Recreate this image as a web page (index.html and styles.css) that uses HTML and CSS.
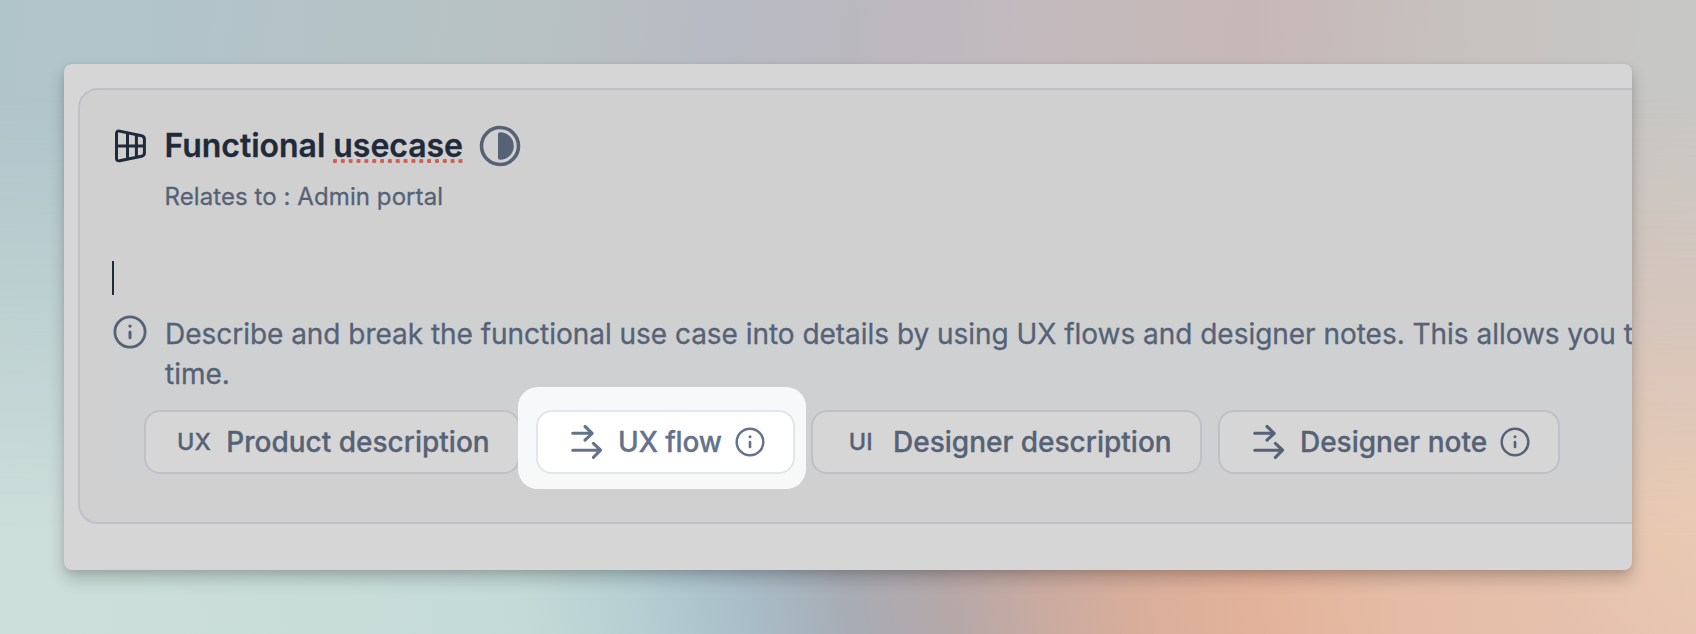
FILE: index.html
```
<!DOCTYPE html>
<html lang="en">
<head>
<meta charset="utf-8">
<title>Functional usecase</title>
<link rel="stylesheet" href="styles.css">
</head>
<body>
<svg class="defs" aria-hidden="true">
  <symbol id="info" viewBox="0 0 34 34">
    <circle cx="17" cy="17" r="15.1" fill="none" stroke="currentColor" stroke-width="2.8"/>
    <circle cx="17" cy="11.1" r="1.7" fill="currentColor"/>
    <path d="M17 17v5.7" fill="none" stroke="currentColor" stroke-width="3" stroke-linecap="round"/>
  </symbol>
  <symbol id="flow" viewBox="0 0 40 40">
    <path d="M6.8 11.3H26M19 4.5l7.2 6.8-7.2 6.8M6.8 28.2H34.4M27.4 21.4l7.2 6.8-7.2 7.2" fill="none" stroke="currentColor" stroke-width="3.1" stroke-linecap="round" stroke-linejoin="round"/>
  </symbol>
</svg>
<main class="window">
  <section class="panel">
    <header class="heading">
      <svg class="grid-icon" viewBox="0 0 36 36" fill="none" stroke="currentColor" stroke-width="3" stroke-linejoin="round">
        <path d="M7.6 3.1 29.6 7.7Q32.4 8.4 32.4 11V25Q32.4 27.6 29.6 28.2L7.6 32.8Q4.5 33.3 4.5 30.2V5.7Q4.5 2.5 7.6 3.1ZM4.5 18H32.4M15.5 4.9V31M24.4 6.7V29.2"/>
      </svg>
      <h1 class="title">Functional <span class="misspelled">usecase</span></h1>
      <svg class="status-icon" viewBox="0 0 42 42">
        <circle cx="21" cy="21" r="18.5" fill="none" stroke="currentColor" stroke-width="3.6"/>
        <path d="M21 7.2A13.8 13.8 0 0 1 21 34.8Q19 34.8 19 33V9Q19 7.2 21 7.2Z" fill="currentColor"/>
      </svg>
    </header>
    <p class="relates">Relates to : Admin portal</p>
    <div class="caret"></div>
    <div class="hint">
      <div class="hint-row">
        <svg class="hint-icon"><use href="#info"/></svg>
        <p class="hint-text">Describe and break the functional use case into details by using UX flows and designer notes. This allows you t<br>time.</p>
      </div>
      <div class="actions">
        <button class="action"><span class="slot">UX</span><span class="label">Product description</span></button>
        <button class="action highlighted"><svg class="slot"><use href="#flow"/></svg><span class="label">UX flow</span><svg class="info"><use href="#info"/></svg></button>
        <button class="action"><span class="slot">UI</span><span class="label">Designer description</span></button>
        <button class="action"><svg class="slot"><use href="#flow"/></svg><span class="label">Designer note</span><svg class="info"><use href="#info"/></svg></button>
      </div>
    </div>
  </section>
</main>
</body>
</html>
```
FILE: styles.css
```
* { box-sizing: border-box; }

body {
  margin: 0;
  padding: 64px;
  width: 1696px;
  height: 634px;
  overflow: hidden;
  position: relative;
  font-family: Inter, "Liberation Sans", sans-serif;
  color: #566275;
  -webkit-text-stroke: .3px currentColor;
  background: linear-gradient(95deg, #b0c5ca 0, #b2c4ca 200px, #b7c2c3 480px, #b8bfc2 610px, #b7bac3 710px, #bab8bf 850px, #c3babd 1040px, #c7b8b7 1250px, #c6c2c0 1480px, #c7c8c6 1696px);
}

body::before {
  content: "";
  position: absolute;
  inset: 0;
  z-index: -1;
  background:
    radial-gradient(ellipse 180px 190px at 1696px 490px, #eacab2 0, #eacab200 100%),
    linear-gradient(80deg, #cddfda 0, #c9ddd8 300px, #c3dad7 520px, #b5cfd2 630px, #a9bdc8 740px, #a8acb4 840px, #b5a8a9 940px, #c9aba1 1030px, #d8ae9b 1120px, #e3b29a 1240px, #e5bda6 1400px, #e5c4b3 1696px);
  mask-image: linear-gradient(180deg, transparent 15%, #000 85%);
}

.defs { position: absolute; width: 0; height: 0; }

.window {
  width: 1568px;
  height: 506px;
  padding: 24px 0 0 14px;
  overflow: hidden;
  border-radius: 8px;
  background: #d6d6d6;
  box-shadow: 0 9px 16px rgba(0, 0, 0, .2), 0 2px 6px rgba(0, 0, 0, .08);
}

.panel {
  width: 1700px;
  height: 436px;
  padding: 34px 32px 0;
  border: 2px solid #c0c1c6;
  border-radius: 20px;
  background: #d0d0d0;
}

.heading {
  display: flex;
  align-items: center;
  height: 44px;
}

.grid-icon { width: 36px; height: 36px; color: #1f2a3a; }

.title {
  margin: 0 16.5px 0 16.5px;
  font-size: 32px;
  line-height: 44px;
  font-weight: 600;
  letter-spacing: -.03px;
  color: #1f2a3a;
}

.misspelled {
  background: radial-gradient(circle at 2px 2px, #cd6156 2px, transparent 2.4px) 0 calc(100% - 2px) / 7.85px 4px repeat-x;
}

.status-icon { width: 42px; height: 42px; }

.relates {
  margin: 12px 0 0 52.5px;
  font-size: 24px;
  line-height: 34px;
  letter-spacing: .08px;
}

.caret {
  width: 2px;
  height: 34px;
  margin-top: 47px;
  background: #1f2a3a;
}

.hint {
  height: 156px;
  margin-top: 20px;
  background: linear-gradient(#d0d0d0, #ced0d2 24px);
}

.hint-row { display: flex; align-items: flex-start; }
.hint-icon { width: 34px; height: 34px; margin: 0 18px 0 1px; flex: none; }
.hint-text { margin: -1px 0 1px; font-size: 28px; line-height: 40px; letter-spacing: -.03px; white-space: nowrap; }

.actions {
  display: flex;
  gap: 16px;
  margin: 15px 0 0 32px;
}

.action {
  display: flex;
  align-items: center;
  height: 64px;
  padding: 0 28px;
  border: 2px solid #c0c1c6;
  border-radius: 16px;
  background: #d6d6d6;
  color: inherit;
  font: 500 28px/40px Inter, "Liberation Sans", sans-serif;
  white-space: nowrap;
}

.slot {
  width: 40px;
  height: 40px;
  margin-right: 12.3px;
  flex: none;
  font-size: 23.5px;
  text-align: center;
}

.info { width: 30px; height: 30px; margin-left: 13px; flex: none; }

.highlighted {
  position: relative;
  z-index: 1;
  border-color: #e2e5ea;
  background: #fff;
  color: #65728b;
  letter-spacing: -.2px;
}

.highlighted::before {
  content: "";
  position: absolute;
  z-index: -1;
  inset: -25px -13px -17px -20px;
  border-radius: 20px;
  background: linear-gradient(#f7f8fa 82%, #f8f8f8 84%);
}

.highlighted::after {
  content: "";
  position: absolute;
  z-index: -1;
  inset: -2px;
  border: 2px solid #e2e5ea;
  border-radius: 16px;
  background: #fff;
}
```
